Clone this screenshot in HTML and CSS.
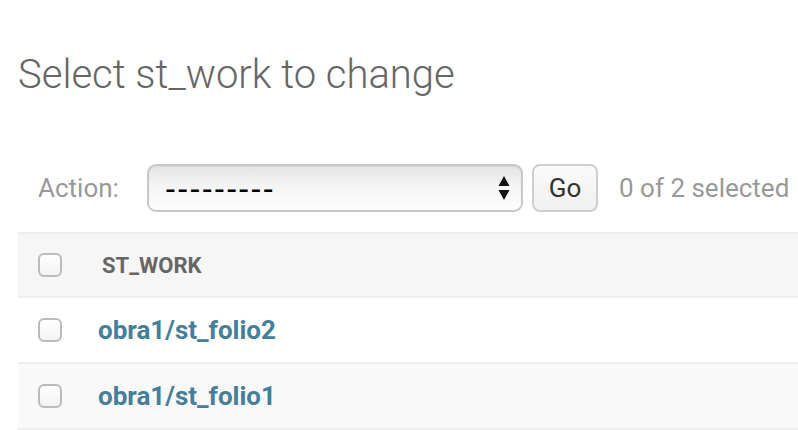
FILE: index.html
```html
<!DOCTYPE html>
<html>
<head>
<meta charset="utf-8">
<link rel="stylesheet" href="styles.css">
</head>
<body>
<div class="content">
  <h1 class="title">Select st_work to change</h1>
  <div class="actions">
    <label class="action-label">Action:</label>
    <div class="select">
      <span class="select-text">---------</span>
      <svg class="select-arrows" width="12" height="24" viewBox="0 0 12 24">
        <path d="M6 0 L11.5 10 L0.5 10 Z" fill="#111"/>
        <path d="M0.5 14 L11.5 14 L6 24 Z" fill="#111"/>
      </svg>
    </div>
    <button class="go">Go</button>
    <span class="counter">0 of 2 selected</span>
  </div>
  <table class="result-list">
    <thead>
      <tr>
        <th class="check-col"><span class="checkbox"></span></th>
        <th class="name-col"><span class="th-text">ST_WORK</span></th>
      </tr>
    </thead>
    <tbody>
      <tr class="row1">
        <td class="check-col"><span class="checkbox"></span></td>
        <td class="name-col"><a class="link" href="#">obra1/st_folio2</a></td>
      </tr>
      <tr class="row2">
        <td class="check-col"><span class="checkbox"></span></td>
        <td class="name-col"><a class="link" href="#">obra1/st_folio1</a></td>
      </tr>
    </tbody>
  </table>
</div>
</body>
</html>
```

FILE: styles.css
```css
html, body {
  margin: 0;
  padding: 0;
  background: #fff;
}
body {
  font-family: Roboto, "Liberation Sans", sans-serif;
  overflow: hidden;
}
.content {
  padding-left: 18px;
  padding-top: 51px;
}
.title {
  margin: 0;
  font-weight: 300;
  font-size: 40px;
  line-height: 48px;
  color: #666;
}
.actions {
  display: flex;
  align-items: center;
  height: 48px;
  margin-top: 65px;
  padding-left: 20px;
}
.action-label {
  width: 109px;
  flex: none;
  font-size: 26px;
  color: #999;
}
.select {
  box-sizing: border-box;
  width: 376px;
  height: 48px;
  border: 2px solid #c8c8c8;
  border-radius: 9px;
  background: linear-gradient(to bottom, #e4e4e4 0%, #f4f4f4 45%, #fdfdfd 100%);
  box-shadow: inset 0 1px 2px rgba(0,0,0,0.06);
  display: flex;
  align-items: center;
  padding-left: 16px;
  padding-right: 11px;
}
.select-text {
  flex: 1;
  font-family: "DejaVu Sans", sans-serif;
  font-size: 30px;
  color: #000;
  letter-spacing: 1.4px;
}
.select-arrows {
  display: block;
}
.go {
  box-sizing: border-box;
  margin-left: 9px;
  width: 66px;
  height: 48px;
  border: 2px solid #cfcfcf;
  border-radius: 8px;
  background: linear-gradient(to bottom, #fafafa, #f0f0f0);
  font-family: Roboto, "Liberation Sans", sans-serif;
  font-size: 26px;
  color: #333;
  padding: 0;
}
.counter {
  margin-left: 21px;
  font-size: 26px;
  color: #999;
}
.result-list {
  margin-top: 20px;
  width: 780px;
  border-collapse: collapse;
  border-top: 2px solid #eee;
}
.result-list th,
.result-list td {
  padding: 0;
  text-align: left;
  vertical-align: middle;
  border-bottom: 2px solid #eee;
}
.result-list thead th {
  height: 62px;
  background: #f6f6f6;
}
.result-list tbody td {
  height: 64px;
}
.row1 td { background: #fff; }
.row2 td { background: #f9f9f9; }
.check-col {
  width: 80px;
  padding-left: 20px !important;
  box-sizing: border-box;
}
.checkbox {
  display: block;
  box-sizing: border-box;
  width: 24px;
  height: 24px;
  border: 2px solid #bbb;
  border-radius: 6px;
  background: linear-gradient(to bottom, #fff, #f3f3f3);
}
.th-text {
  padding-left: 4px;
  font-size: 22px;
  font-weight: 700;
  color: #666;
}
.link {
  font-size: 26px;
  font-weight: 700;
  color: #447e9b;
  text-decoration: none;
}
```
